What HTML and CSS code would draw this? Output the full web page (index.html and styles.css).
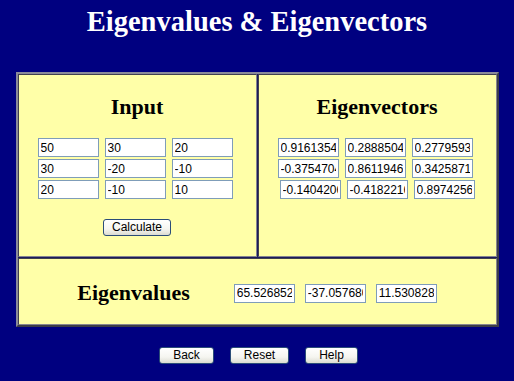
FILE: index.html
```html
<!DOCTYPE html>
<html lang="en">
<head>
    <meta charset="UTF-8">
    <meta name="viewport" content="width=device-width, initial-scale=1.0">
    <title>Eigenvalues &amp; Eigenvectors</title>
    <link rel="stylesheet" href="styles.css">
</head>
<body>
    <h1 class="title">Eigenvalues &amp; Eigenvectors</h1>

    <!-- Main panel -->
    <div class="panel">
        <div class="cell">
            <h2>Input</h2>
            <div class="row"><input type="text" value="50"><input type="text" value="30"><input type="text" value="20"></div>
            <div class="row"><input type="text" value="30"><input type="text" value="-20"><input type="text" value="-10"></div>
            <div class="row"><input type="text" value="20"><input type="text" value="-10"><input type="text" value="10"></div>
            <button class="calc-btn" type="button">Calculate</button>
        </div>

        <div class="cell">
            <h2>Eigenvectors</h2>
            <div class="row"><input type="text" value="0.9161354"><input type="text" value="0.2888504"><input type="text" value="0.2779593"></div>
            <div class="row"><input type="text" value="-0.3754704"><input type="text" value="0.8611946"><input type="text" value="0.3425871"></div>
            <div class="row row-last"><input type="text" value="-0.1404206"><input type="text" value="-0.4182216"><input type="text" value="0.8974256"></div>
        </div>

        <div class="cell cell-wide">
            <h2>Eigenvalues</h2>
            <div class="values">
                <input type="text" value="65.526852">
                <input type="text" value="-37.057680">
                <input type="text" value="11.530828">
            </div>
        </div>
    </div>

    <!-- Bottom buttons -->
    <div class="nav">
        <button class="nav-btn" type="button">Back</button>
        <button class="nav-btn" type="button">Reset</button>
        <button class="nav-btn" type="button">Help</button>
    </div>
</body>
</html>
```

FILE: styles.css
```css
/* Basic Reset */
* {
    margin: 0;
    padding: 0;
    box-sizing: border-box;
}

body {
    background: #000080;
    font-family: "Liberation Sans", Arial, sans-serif;
    width: 514px;
    height: 381px;
    overflow: hidden;
}

/* Title */
.title {
    margin-top: 5px;
    color: #fff;
    font-family: "Liberation Serif", "Times New Roman", serif;
    font-size: 28.5px;
    line-height: 33px;
    font-weight: bold;
    text-align: center;
}

/* Panel (old style table) */
.panel {
    width: 483px;
    margin: 34px auto 0;
    display: grid;
    grid-template-columns: 239px 239px;
    grid-template-rows: 183px 67px;
    gap: 1px;
    border: 2px solid;
    border-color: #8a8a9a #3c3c48 #3c3c48 #8a8a9a;
    background: #1c1c5c;
}

.cell {
    background: #ffffa8;
    border: 1px solid;
    border-color: #404050 #858590 #858590 #404050;
    display: flex;
    flex-direction: column;
    align-items: center;
}

.cell h2 {
    margin: 19px 0 18px;
    font-family: "Liberation Serif", "Times New Roman", serif;
    font-size: 22px;
    line-height: 26px;
    font-weight: bold;
    color: #000;
}

.row {
    display: flex;
    gap: 6px;
    margin-bottom: 2px;
    padding-right: 4px;
}

.row-last {
    padding-right: 0;
}

input {
    width: 61px;
    height: 19px;
    padding: 0 2px;
    border: 1px solid #7f9db9;
    background: #fff;
    color: #000;
    font-family: "Liberation Sans", Arial, sans-serif;
    font-size: 12px;
}

button {
    height: 17px;
    border: 1px solid #2b4d78;
    border-radius: 3px;
    background: linear-gradient(#ffffff, #f5f5f0 60%, #dcdcd2);
    color: #000;
    font-family: "Liberation Sans", Arial, sans-serif;
    font-size: 12px;
    line-height: 15px;
    cursor: pointer;
}

.calc-btn {
    margin-top: 18px;
    padding: 0 8px;
}

/* Eigenvalues row */
.cell-wide {
    grid-column: 1 / 3;
    flex-direction: row;
    justify-content: center;
    padding-top: 3px;
}

.cell-wide h2 {
    margin: 0 44px 0 0;
}

.values {
    display: flex;
    gap: 10px;
}

/* Bottom buttons */
.nav {
    display: flex;
    justify-content: center;
    gap: 16px;
    margin-top: 20px;
    padding-left: 3px;
}

.nav-btn {
    padding: 0 13px;
}
```
